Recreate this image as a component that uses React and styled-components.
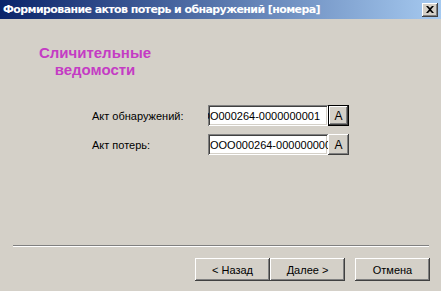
import React from "react";
import styled, { createGlobalStyle } from "styled-components";

const Global = createGlobalStyle`
  html, body { margin: 0; padding: 0; background: #d4d0c8; }
  body { font-family: "Liberation Sans", Arial, sans-serif; font-size: 11px; color: #000; }
`;

const Window = styled.div`
  width: 441px;
  height: 291px;
  display: flex;
  flex-direction: column;
  background: #d4d0c8;
  overflow: hidden;
`;

const TitleBar = styled.div`
  height: 19px;
  display: flex;
  align-items: center;
  justify-content: space-between;
  padding: 0 3px 0 3px;
  background: linear-gradient(to right, #0a246a 0%, #a6caf0 100%);
  box-sizing: border-box;
`;

const Title = styled.span`
  color: #fff;
  font-weight: bold;
  font-size: 11px;
  font-family: "DejaVu Sans", sans-serif;
  letter-spacing: -0.6px;
  white-space: nowrap;
`;

const CloseButton = styled.div`
  width: 16px;
  height: 14px;
  box-sizing: border-box;
  background: #d4d0c8;
  box-shadow: inset -1px -1px #404040, inset 1px 1px #fff, inset -2px -2px #808080;
  display: flex;
  align-items: center;
  justify-content: center;
`;

const Content = styled.div`
  flex: 1;
  display: flex;
  flex-direction: column;
`;

const Heading = styled.div`
  margin: 25px 0 0 35px;
  width: 120px;
  text-align: center;
  color: #c43cc4;
  font-family: "Liberation Sans", Arial, sans-serif;
  font-weight: bold;
  font-size: 15px;
  line-height: 17px;
`;

const Form = styled.div`
  margin-top: 27px;
  padding-left: 92px;
  display: flex;
  flex-direction: column;
  gap: 8px;
`;

const Row = styled.div`
  display: flex;
  align-items: center;
  height: 21px;
`;

const Label = styled.span`
  width: 116px;
  font-size: 11px;
`;

const Field = styled.div`
  width: 120px;
  height: 21px;
  box-sizing: border-box;
  background: #fff;
  box-shadow: inset 1px 1px #808080, inset -1px -1px #fff, inset 2px 2px #404040, inset -2px -2px #d4d0c8;
  display: flex;
  align-items: center;
  justify-content: ${(p) => (p.$end ? "flex-end" : "flex-start")};
  padding: 0 ${(p) => (p.$end ? "7px" : "0")} 0 2px;
  overflow: hidden;
  white-space: nowrap;
  font-size: 11px;
  color: #000;
`;

const Caret = styled.span`
  display: inline-block;
  width: 1px;
  height: 13px;
  background: #000;
  margin-left: 1px;
`;

const SmallButton = styled.div`
  width: 21px;
  height: 21px;
  box-sizing: border-box;
  display: flex;
  align-items: center;
  justify-content: center;
  font-size: 12px;
  background: #d4d0c8;
  box-shadow: ${(p) =>
    p.$default
      ? "inset 0 0 0 1px #000, inset -2px -2px #404040, inset 2px 2px #fff, inset -3px -3px #808080"
      : "inset -1px -1px #404040, inset 1px 1px #fff, inset -2px -2px #808080"};
`;

const Spacer = styled.div`
  flex: 1;
`;

const Separator = styled.div`
  margin: 0 12px 0 13px;
  height: 1px;
  background: #808080;
  border-bottom: 1px solid #fff;
`;

const Footer = styled.div`
  display: flex;
  justify-content: flex-end;
  padding: 11px 11px 10px 0;
`;

const Pair = styled.div`
  display: flex;
  margin-right: 10px;
`;

const Button = styled.div`
  width: 75px;
  height: 23px;
  box-sizing: border-box;
  display: flex;
  align-items: center;
  justify-content: center;
  font-size: 11px;
  background: #d4d0c8;
  box-shadow: inset -1px -1px #404040, inset 1px 1px #fff, inset -2px -2px #808080;
`;

export default function App() {
  return (
    <>
      <Global />
      <Window>
        <TitleBar>
          <Title>Формирование актов потерь и обнаружений [номера]</Title>
          <CloseButton>
            <svg width="8" height="7" viewBox="0 0 8 7">
              <path d="M0 0h2l2 2 2-2h2L5 3.5 8 7H6L4 5 2 7H0l3-3.5z" fill="#000" />
            </svg>
          </CloseButton>
        </TitleBar>
        <Content>
          <Heading>
            Сличительные
            <br />
            ведомости
          </Heading>
          <Form>
            <Row>
              <Label>Акт обнаружений:</Label>
              <Field $end>
                OOO000264-0000000001
                <Caret />
              </Field>
              <SmallButton $default>А</SmallButton>
            </Row>
            <Row>
              <Label>Акт потерь:</Label>
              <Field>OOO000264-0000000000</Field>
              <SmallButton>А</SmallButton>
            </Row>
          </Form>
          <Spacer />
          <Separator />
          <Footer>
            <Pair>
              <Button>&lt; Назад</Button>
              <Button>Далее &gt;</Button>
            </Pair>
            <Button>Отмена</Button>
          </Footer>
        </Content>
      </Window>
    </>
  );
}
